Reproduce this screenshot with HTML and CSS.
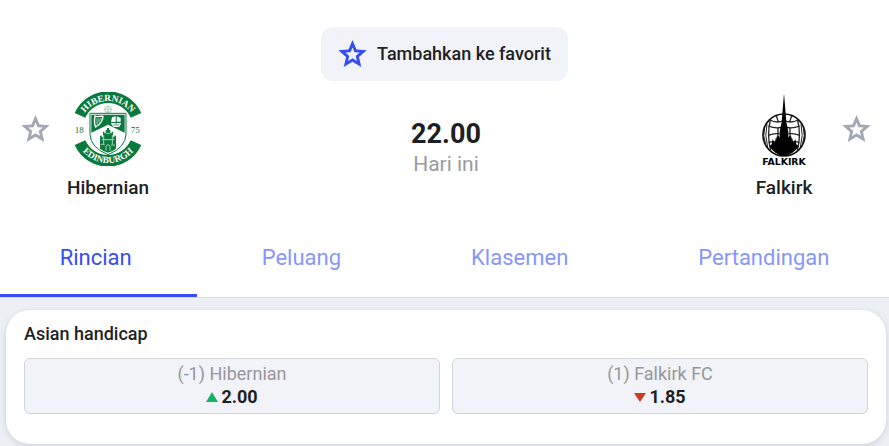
FILE: index.html
```html
<!DOCTYPE html>
<html lang="id">
<head>
<meta charset="UTF-8">
<meta name="viewport" content="width=device-width, initial-scale=1.0">
<title>Hibernian - Falkirk</title>
<link rel="stylesheet" href="styles.css">
</head>
<body>
<svg class="defs" aria-hidden="true">
<symbol id="star" viewBox="2 2 20 19">
<path d="M22 9.24l-7.19-.62L12 2 9.19 8.63 2 9.24l5.46 4.73L5.82 21 12 17.27 18.18 21l-1.63-7.03L22 9.24zM12 14.9l-3.1 1.87.82-3.53-2.74-2.37 3.61-.31L12 7.2l1.41 3.36 3.61.31-2.74 2.37.82 3.53L12 14.9z"/>
</symbol>
</svg>
<header class="match">
<button type="button" class="favorite">
<svg class="star"><use href="#star"/></svg>
<span>Tambahkan ke favorit</span>
</button>
<div class="teams">
<div class="side">
<button type="button" class="star-button" aria-label="Hibernian"><svg class="star"><use href="#star"/></svg></button>
<div class="team">
<svg class="crest" viewBox="37 21 216 222" aria-hidden="true">
<defs>
<path id="arc-top" d="M60 147A86 86 0 1 1 230 147"/>
<path id="arc-bottom" d="M43 132A102 102 0 0 0 247 132"/>
</defs>
<g fill="none" stroke="#087a3d" stroke-width="35">
<path d="M61 91A92 92 0 0 1 229 91"/>
<path d="M61 173A92 92 0 0 0 229 173"/>
</g>
<g class="crest-ring">
<text text-anchor="middle"><textPath href="#arc-top" startOffset="50%">HIBERNIAN</textPath></text>
<text text-anchor="middle"><textPath href="#arc-bottom" startOffset="50%">EDINBURGH</textPath></text>
</g>
<text class="crest-year" x="45" y="143">18</text>
<text class="crest-year" x="213" y="143">75</text>
<circle cx="145" cy="73" r="13" fill="#a9d1b9" stroke="#fff" stroke-width="3"/>
<path d="M135 69h20M135 77h20M141 62v22M149 62v22" stroke="#fff" stroke-width="2"/>
<path d="M91 85H199V147Q198 188 145 209Q92 188 91 147Z" fill="#fff" stroke="#087a3d" stroke-width="3"/>
<path d="M95 89H195V143L145 119L95 143Z" fill="#087a3d"/>
<path d="M106 93c8 5 14-1 24 1c0 12-10 25-22 32c-5-9-4-21-2-33z" fill="none" stroke="#fff" stroke-width="4"/>
<path d="M112 100v18M118 100v13M124 99v8" stroke="#fff" stroke-width="2"/>
<path d="M153 114h32l-6 12h-18zM157 97l12-4v18h-15zM171 94l12 5v11h-12z" fill="#fff"/>
<path d="M169 91v28M160 120h19" stroke="#087a3d" stroke-width="2"/>
<path d="M121 191V152h5v5h4v-17h4v5h4v-10h4v-6h6v6h4v10h4v-5h4v17h4v-5h5v39Q158 200 145 203Q132 200 121 191Z" fill="#087a3d"/>
<path d="M132 150v28M158 150v28M126 164h38M140 145h10M139 197v-14q6-9 12 0v14M123 178h12M154 180h12" fill="none" stroke="#a9d1b9" stroke-width="3"/>
</svg>
<span class="team-name">Hibernian</span>
</div>
</div>
<div class="kickoff">
<strong class="time">22.00</strong>
<span class="day">Hari ini</span>
</div>
<div class="side side-away">
<div class="team">
<svg class="crest" viewBox="9 21 216 222" aria-hidden="true">
<circle cx="117" cy="150" r="63" fill="#fff" stroke="#111" stroke-width="5"/>
<g fill="none" stroke="#222" stroke-width="4">
<path d="M76 105Q65 150 77 196M158 105Q169 150 157 196"/>
<path d="M59 128Q52 151 62 179M66 117Q58 151 68 187M175 128Q182 151 172 179M168 117Q176 151 166 187" stroke-width="3"/>
<path d="M75 105Q94 116 117 107Q140 116 159 105M70 123Q94 133 117 125Q140 133 164 123M70 151Q90 143 104 147M130 147Q144 143 164 151M71 173Q82 168 92 171M142 171Q152 168 163 173"/>
<path d="M94 92l6 19M140 92l-6 19M99 128v20M135 128v20"/>
</g>
<path d="M117 25L124 111L130 140L130 158L136 147L140 164V153L145 174L151 162L154 178L161 184Q144 210 117 213Q90 210 73 184L80 178L83 162L89 174L94 153V164L98 147L104 158V140L110 111Z" fill="#000"/>
<text class="crest-name" x="117" y="240" text-anchor="middle">FALKIRK</text>
</svg>
<span class="team-name">Falkirk</span>
</div>
<button type="button" class="star-button" aria-label="Falkirk"><svg class="star"><use href="#star"/></svg></button>
</div>
</div>
<nav class="tabs">
<a href="#rincian" class="tab active">Rincian</a>
<a href="#peluang" class="tab">Peluang</a>
<a href="#klasemen" class="tab">Klasemen</a>
<a href="#pertandingan" class="tab">Pertandingan</a>
</nav>
</header>
<main class="content" id="rincian">
<section class="card">
<h2>Asian handicap</h2>
<div class="odds">
<button type="button" class="odd">
<span class="odd-name">(-1) Hibernian</span>
<span class="odd-value"><svg class="arrow up" viewBox="0 0 12 10"><path d="M6 0L12 10H0z"/></svg>2.00</span>
</button>
<button type="button" class="odd">
<span class="odd-name">(1) Falkirk FC</span>
<span class="odd-value"><svg class="arrow down" viewBox="0 0 12 10"><path d="M0 1H12L6 10z"/></svg>1.85</span>
</button>
</div>
</section>
</main>
</body>
</html>
```
FILE: styles.css
```css
* {
box-sizing: border-box;
}
body {
margin: 0;
font-family: Roboto, "Liberation Sans", sans-serif;
font-size: 18px;
color: #1e1f24;
background-color: #eceff4;
}
button {
font: inherit;
color: inherit;
border: none;
cursor: pointer;
}
.defs {
display: none;
}
.match {
display: flex;
flex-direction: column;
align-items: center;
padding-top: 27px;
background-color: #fff;
border-bottom: 1px solid #d9dbde;
}
.favorite {
display: flex;
align-items: center;
gap: 10px;
height: 54px;
padding: 0 17px 2px;
font-weight: 500;
background-color: #f2f3f8;
border-radius: 12px;
}
.star {
display: block;
width: 29px;
height: 27px;
fill: #a4a8b5;
}
.favorite .star {
fill: #364df5;
}
.teams {
display: grid;
grid-template-columns: 1fr auto 1fr;
width: 100%;
padding: 11px 18px 0 21px;
}
.side {
display: flex;
align-items: flex-start;
gap: 15px;
}
.side-away {
justify-content: flex-end;
}
.star-button {
margin-top: 23px;
padding: 0;
background: none;
}
.team {
display: flex;
flex-direction: column;
align-items: center;
gap: 10px;
min-width: 86px;
}
.crest {
width: 72px;
height: 74px;
}
.crest-ring {
font-family: "Liberation Serif", serif;
font-size: 28px;
font-weight: bold;
fill: #fff;
}
.crest-year {
font-family: "Liberation Serif", serif;
font-size: 27px;
fill: #087a3d;
}
.crest-name {
font-family: "DejaVu Sans", sans-serif;
font-size: 28px;
font-weight: bold;
}
.team-name {
font-size: 19px;
font-weight: 500;
line-height: 24px;
}
.kickoff {
display: flex;
flex-direction: column;
align-items: center;
padding-top: 26px;
}
.time {
font-size: 27px;
line-height: 32px;
}
.day {
font-size: 21px;
line-height: 28px;
color: #9a9b9f;
}
.tabs {
display: flex;
justify-content: center;
width: 100%;
margin-top: 18px;
overflow: hidden;
}
.tab {
flex: none;
height: 79px;
padding: 0 65px;
font-size: 22px;
line-height: 80px;
color: #8896fb;
text-decoration: none;
}
.tab.active {
color: #364df5;
border-bottom: 3px solid #364df5;
}
.content {
padding: 12px 3px 12px 6px;
}
.card {
padding: 12px 18px 30px;
background-color: #fff;
border-radius: 24px;
box-shadow: 0 2px 6px rgba(40, 50, 70, 0.15);
}
.card h2 {
margin: 0 0 12px;
font-size: 18px;
font-weight: 500;
line-height: 24px;
}
.odds {
display: flex;
gap: 12px;
}
.odd {
flex: 1;
display: flex;
flex-direction: column;
align-items: center;
height: 56px;
padding: 3px 0 0;
background-color: #f2f3f8;
border: 1px solid #d3d4da;
border-radius: 6px;
}
.odd-name {
line-height: 24px;
color: #96979b;
}
.odd-value {
display: flex;
align-items: center;
gap: 3px;
font-weight: bold;
line-height: 22px;
}
.arrow {
width: 12px;
height: 10px;
}
.up {
fill: #17b26a;
}
.down {
fill: #cc3a20;
}
```
